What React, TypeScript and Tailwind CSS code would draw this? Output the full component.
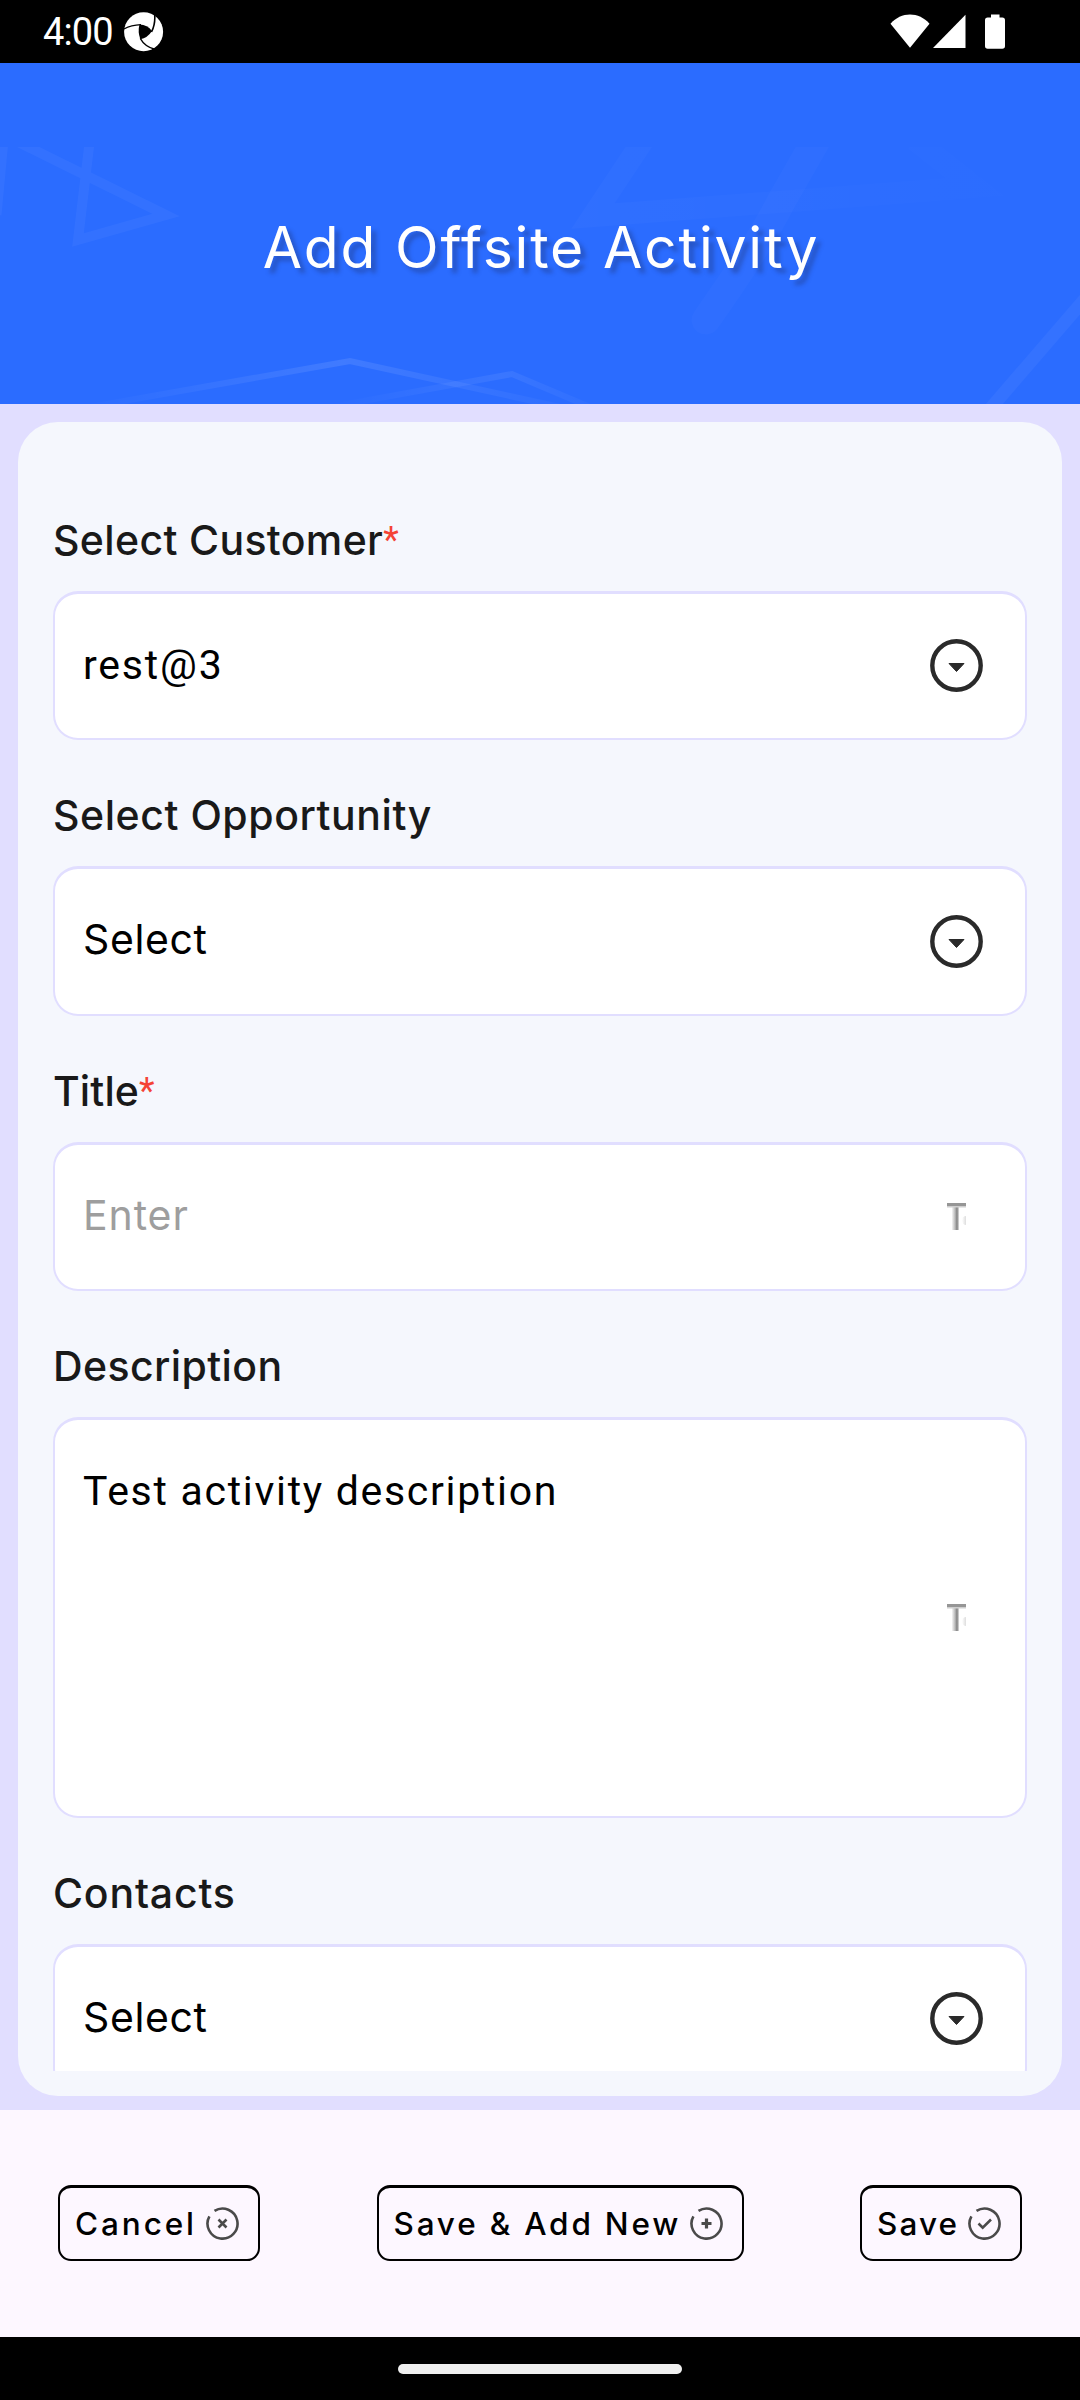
import type { ReactNode } from 'react';

function StatusBar() {
  return (
    <div className="flex h-[63px] items-center justify-between bg-black pl-[43px] pr-[75px] text-white">
      <div className="flex items-center">
        <span className="w-[81px] font-[Roboto,sans-serif] text-[38px] leading-[44px] tracking-[-0.9px]">4:00</span>
        <svg width="40" height="40" viewBox="0 0 40 40" fill="none">
          <circle cx="19.6" cy="19.8" r="19.5" fill="#fff" />
          <path d="M15.5 12.5Q23.5 12.5 28 19Q23.5 26 16.3 27.2Q13.5 19.5 15.5 12.5Z" fill="#000" />
          <path d="M17 12.6Q7 13 0 17" stroke="#000" strokeWidth="1.3" />
          <path d="M27.5 20Q32 11 30.4 0" stroke="#000" strokeWidth="1.6" />
          <path d="M16.3 26.5Q21 35 31.5 37.5" stroke="#000" strokeWidth="1.5" />
          <path d="M26 40L28.5 37.2L37 36V40Z" fill="#000" />
        </svg>
      </div>
      <svg width="115" height="35" viewBox="0 0 115 35" fill="#fff">
        <path d="M0.5 9.8C11 -2.6 29 -2.6 39.5 9.8L20 33.7Z" />
        <path d="M43 34L75.5 0.7V34Z" />
        <path d="M101 0.5h8.5v3h2.8q2.7 0 2.7 2.7v25.8q0 2.7 -2.7 2.7h-14.6q-2.7 0 -2.7 -2.7v-25.8q0 -2.7 2.7 -2.7h3.3z" />
      </svg>
    </div>
  );
}

function Header() {
  return (
    <header className="relative h-[341px] overflow-hidden bg-[#2b6cff] pt-[155px]">
      <svg className="absolute inset-0" width="1080" height="341" viewBox="0 63 1080 341" fill="none">
        <defs>
          <clipPath id="art">
            <rect x="0" y="147" width="1080" height="257" />
          </clipPath>
          <linearGradient id="peakA" gradientUnits="userSpaceOnUse" x1="100" y1="0" x2="540" y2="0">
            <stop offset="0" stopColor="#fff" stopOpacity="0.01" />
            <stop offset="0.55" stopColor="#fff" stopOpacity="0.1" />
            <stop offset="1" stopColor="#fff" stopOpacity="0.03" />
          </linearGradient>
          <linearGradient id="peakB" gradientUnits="userSpaceOnUse" x1="330" y1="0" x2="595" y2="0">
            <stop offset="0" stopColor="#fff" stopOpacity="0" />
            <stop offset="0.65" stopColor="#fff" stopOpacity="0.07" />
            <stop offset="1" stopColor="#fff" stopOpacity="0.02" />
          </linearGradient>
          <linearGradient id="wide" gradientUnits="userSpaceOnUse" x1="580" y1="0" x2="990" y2="0">
            <stop offset="0" stopColor="#fff" stopOpacity="0.022" />
            <stop offset="1" stopColor="#fff" stopOpacity="0.004" />
          </linearGradient>
        </defs>
        <g clipPath="url(#art)">
          <path d="M91 130L78 240L166 215L10 138" stroke="#fff" strokeOpacity="0.04" strokeWidth="10" />
          <path d="M4 140L-3 215" stroke="#fff" strokeOpacity="0.04" strokeWidth="9" />
          <path d="M90 407L350 361L560 407" stroke="url(#peakA)" strokeWidth="6" />
          <path d="M330 407L512 374L590 407" stroke="url(#peakB)" strokeWidth="6" />
          <path d="M650 130L593 216L975 187L915 140" stroke="url(#wide)" strokeWidth="22" />
          <path d="M822 130L782 200Q762 240 706 320" stroke="#fff" strokeOpacity="0.02" strokeWidth="29" strokeLinecap="round" />
          <path d="M1090 293L984 416" stroke="#fff" strokeOpacity="0.045" strokeWidth="13" />
        </g>
      </svg>
      <h1 className="relative pl-[2px] text-center text-[57px] font-normal leading-[60px] tracking-[1.8px] text-white [text-shadow:5px_5px_4px_rgba(30,40,90,0.35)]">
        Add Offsite Activity
      </h1>
    </header>
  );
}

function Label({ children, tracking, required }: { children: ReactNode; tracking: string; required?: boolean }) {
  return (
    <div className="flex h-[76px] text-[41px] font-medium leading-[50px] text-[#191919]">
      <span className={tracking}>{children}</span>
      {required && <span className="font-[Roboto,sans-serif] text-[36px] font-normal text-[#f44336]">*</span>}
    </div>
  );
}

function Box({ height, children }: { height: string; children: ReactNode }) {
  return (
    <div className={`mb-[50px] flex items-center justify-between rounded-[25px] border-2 border-t-[3px] border-[#e1deff] bg-white pb-px pl-7 pr-[42px] ${height}`}>
      {children}
    </div>
  );
}

function DropIcon() {
  return (
    <svg width="53" height="53" viewBox="0 0 53 53" fill="none">
      <circle cx="26.5" cy="26.5" r="24.2" stroke="#2a2a2a" strokeWidth="4.4" />
      <path d="M19 24.5H34L26.5 32.5Z" fill="#2a2a2a" stroke="#2a2a2a" strokeWidth="1" strokeLinejoin="round" />
    </svg>
  );
}

/* Text-format glyph, cut off at its right edge */
function TextIcon() {
  return (
    <svg className="mx-[17px]" width="19" height="27" viewBox="0 0 19 27">
      <defs>
        <linearGradient id="stem">
          <stop offset="0" stopColor="#fff" />
          <stop offset="0.5" stopColor="#b5b5b5" />
          <stop offset="0.65" stopColor="#8e8e8e" />
          <stop offset="0.85" stopColor="#999" />
          <stop offset="1" stopColor="#eee" />
        </linearGradient>
        <linearGradient id="dot">
          <stop offset="0" stopColor="#fff" />
          <stop offset="1" stopColor="#bbb" />
        </linearGradient>
      </defs>
      <rect x="4.5" y="1" width="7.5" height="26" fill="url(#stem)" />
      <rect width="19" height="3" fill="#969696" />
      <rect y="3" width="19" height="1.5" fill="#cfcfcf" />
      <ellipse cx="19" cy="17.5" rx="4" ry="4.5" fill="url(#dot)" />
    </svg>
  );
}

function ActionButton({ width, tracking, label, children }: { width: string; tracking: string; label: string; children: ReactNode }) {
  return (
    <button className={`flex h-[76px] items-center justify-between rounded-[13px] border-2 border-t-[3px] border-black pl-[15px] pr-[19px] ${width}`}>
      <span className={`whitespace-nowrap text-[31.5px] font-medium leading-10 ${tracking}`}>{label}</span>
      <svg className="-ml-2 shrink-0" width="33" height="33" viewBox="0 0 33 33" fill="none" stroke="#4a4a4a" strokeWidth="2.6">
        <path d="M8.5 3.9A15 15 0 1 1 3.4 9.3" />
        {children}
      </svg>
    </button>
  );
}

export default function App() {
  return (
    <div className="flex h-[2400px] w-[1080px] flex-col overflow-hidden font-[Inter,sans-serif] text-black">
      <StatusBar />
      <Header />
      <main className="h-[1706px] bg-[#e1deff] px-[18px] pb-[14px] pt-[18px]">
        <section className="h-full rounded-[40px] bg-[#f5f7fd] px-[35px]">
          <div className="h-[1649px] overflow-hidden pt-[93px]">
            <Label tracking="tracking-[0.35px]" required>Select Customer</Label>
            <Box height="h-[149px]">
              <span className="font-[Roboto,sans-serif] text-[41px] tracking-[1.8px]">rest@3</span>
              <DropIcon />
            </Box>
            <Label tracking="tracking-[0.55px]">Select Opportunity</Label>
            <Box height="h-[150px]">
              <span className="pb-[2px] text-[41px] tracking-[0.6px]">Select</span>
              <DropIcon />
            </Box>
            <Label tracking="tracking-[0.1px]" required>Title</Label>
            <Box height="h-[149px]">
              <span className="pb-[2px] text-[41px] tracking-[0.9px] text-[#9e9e9e]">Enter</span>
              <TextIcon />
            </Box>
            <Label tracking="tracking-[0.4px]">Description</Label>
            <Box height="h-[401px]">
              <span className="self-start pt-[46px] font-[Roboto,sans-serif] text-[41px] leading-[50px] tracking-[1.7px]">Test activity description</span>
              <TextIcon />
            </Box>
            <Label tracking="tracking-[0.8px]">Contacts</Label>
            <Box height="h-[149px]">
              <span className="pb-[2px] text-[41px] tracking-[0.6px]">Select</span>
              <DropIcon />
            </Box>
          </div>
        </section>
      </main>
      <footer className="flex h-[227px] items-center justify-between bg-[#fdf7ff] px-[58px] pb-px">
        <ActionButton width="w-[202px]" tracking="tracking-[2.9px]" label="Cancel">
          <path d="M12.5 12.5l8 8M20.5 12.5l-8 8" />
        </ActionButton>
        <ActionButton width="w-[367px]" tracking="tracking-[2.8px]" label="Save & Add New">
          <path d="M16.5 11.5v10M11.5 16.5h10" strokeWidth="3.2" />
        </ActionButton>
        <ActionButton width="w-[162px]" tracking="tracking-[2.1px]" label="Save">
          <path d="M10.5 16.5l4.2 4.2l8.3 -8.2" />
        </ActionButton>
      </footer>
      <div className="flex h-[63px] items-center justify-center bg-black">
        <div className="h-[10px] w-[284px] rounded-full bg-[#f0f0f0]" />
      </div>
    </div>
  );
}
